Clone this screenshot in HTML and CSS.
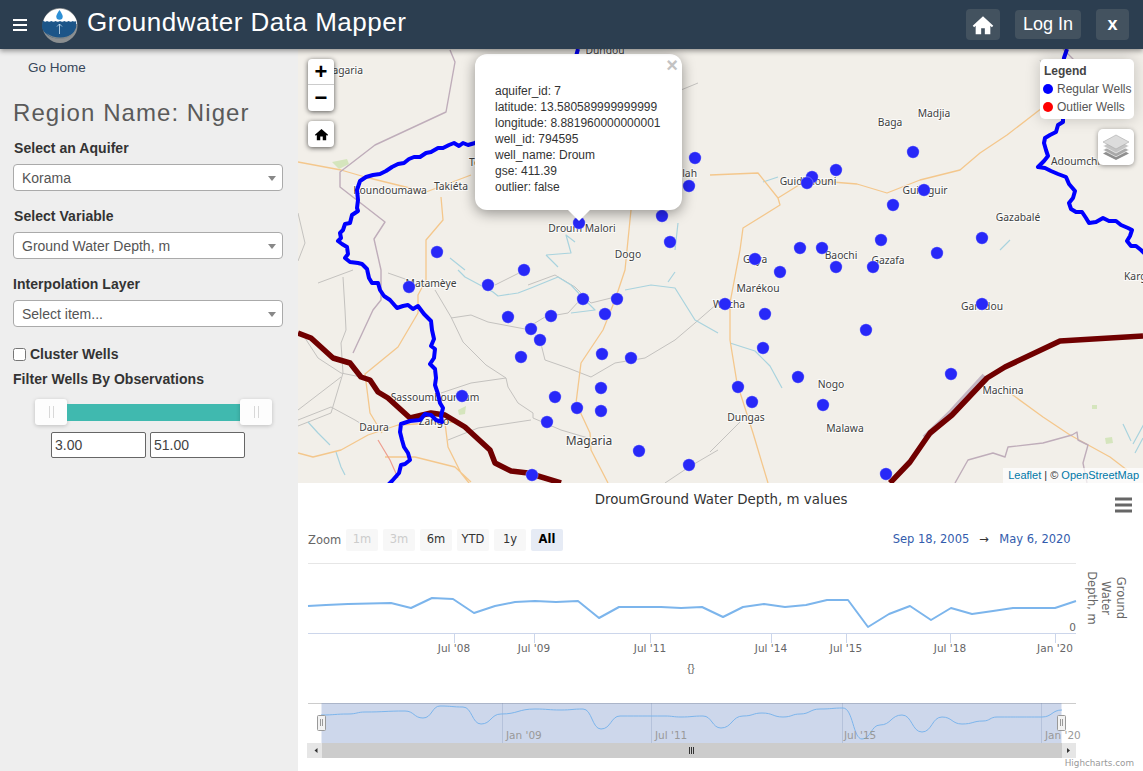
FILE: index.html
```html
<!DOCTYPE html>
<html lang="en">
<head>
<meta charset="utf-8">
<title>Groundwater Data Mapper</title>
<link rel="stylesheet" href="styles.css">
</head>
<body>
<div class="app">
  <header class="topbar">
    <div class="burger"><span></span><span></span><span></span></div>
    <svg class="logo" viewBox="0 0 36 36">
      <circle cx="18" cy="18.5" r="17.5" fill="#8b8f91"/>
      <path d="M1 15a17.500 17.500 0 0 1 34 0v2H1z" fill="#fff"/>
      <path d="M.8 13.500q2 2 4.200 .5q2.200 1.500 4.300 0q2.200 1.500 4.300 0q2.200 1.500 4.400 0q2.200 1.500 4.300 0q2.200 1.500 4.300 0q2.200 1.500 4.300 0q1.500 1 3.300 0v6a17.500 14 0 0 1-34.400 0z" fill="#1c5588"/>
      <path d="M4 26a17 14 0 0 0 28 0q-14 9-28 0z" fill="#7d8589"/>
      <path d="M17.500 3q-3.200 4.500-3.200 6.500a3.200 3.200 0 0 0 6.400 0q0-2-3.200-6.500z" fill="#2d8fd5"/>
      <path d="M17.500 27V17m-2.500 2.500l2.500-2.500l2.500 2.500" fill="none" stroke="#cfe3f2" stroke-width=".8"/>
    </svg>
    <h1 class="brand">Groundwater Data Mapper</h1>
    <div class="actions">
      <button class="hbtn hbtn-home"><svg viewBox="0 0 24 24" class="homeicon"><path d="M12 2.500L.8 12.800l1.500 1.600L4 12.900V22h6v-6.500h4V22h6v-9.100l1.700 1.500 1.500-1.600z"/></svg></button>
      <button class="hbtn hbtn-login">Log In</button>
      <button class="hbtn hbtn-x">x</button>
    </div>
  </header>
  <div class="content">
    <aside class="sidebar">
      <a class="gohome">Go Home</a>
      <h2 class="region">Region Name: Niger</h2>
      <label class="flabel">Select an Aquifer</label>
      <div class="sel">Korama</div>
      <label class="flabel">Select Variable</label>
      <div class="sel">Ground Water Depth, m</div>
      <label class="flabel flabel-tight">Interpolation Layer</label>
      <div class="sel">Select item...</div>
      <label class="check"><input type="checkbox"><span>Cluster Wells</span></label>
      <label class="flabel flabel-filter">Filter Wells By Observations</label>
      <div class="slider">
        <div class="grip"><i></i><i></i></div>
        <div class="bar"></div>
        <div class="grip"><i></i><i></i></div>
      </div>
      <div class="ranges">
        <input class="rng" value="3.00">
        <input class="rng" value="51.00">
      </div>
    </aside>
    <main class="panel">
      <section class="map">
        <svg class="mapsvg" viewBox="298 49 845 434">
          <g class="road-gray">
            <path d="M343 277l2 33 1 20-5 13 2 30-12 40-33 13M305 338l13 20 23 15 20 4M298 410l43-33M298 420l33-13 24 13 13 8M435 290l16 27 12 25 23 23 20 13 2 9 10 16 15 10v5l28 12 27 8M441 393l30-10 35-5M448 440l30-12 53-8M451 318l20-3 17 7 37 7 20-12 23-4 12-13M540 340l5 20 23 8 23 9 24-14 30-5 30-18 20-17 23-20M495 285l16-8 14-7M528 285l27-10 20 12 16 16 20-5M388 273l20 7M318 283l35-13M665 483l24-16 29-17M710 452l30-30M298 213l7 30-7 18M681 90l17-7M1040 60l15 35"/>
          </g>
          <g class="river">
            <path d="M458 270l7 7 28 15 5 4 20-3 13-5 27-11 13 8 14 15 10 10-24 3M625 290l26-5 24 3 20 32 23 13M668 282l7-10M546 255l12 12M575 242l-9-7 5 18-25 2M450 258l15 12M678 223l-3 27M308 422l10 11 12 12M336 452l5 15 4 8M763 182l15-5M1123 424l8 17M1145 422l-12 22M1143 438l-8 15M1000 250l10-10"/>
            <path d="M730 343l25 8 15 15 12 22"/>
          </g>
          <g class="road">
            <path d="M298 162l43 8 24 7 61 15 45-17M441 197l2 23-17 20v40l-8 15v18l-20 34-33 27 5 39 12 20M298 453l15 4 28-7 27-15 30-10 55-3M445 423l3 24 13 26 12 15M385 457h30l40 10 16 15M631 210l-6 60-10 30-12 30-22 33-5 40 14 30 1 17 17 33M710 175l48-2 20 25 2 7-37 23-3 22-10 53v37l7 43 16 50 15 50M778 198l29-18 50 4 30 9 33-13 40-10 20-17 27-18 35-27 25-10M1010 393l33 24 27 18 40 22 17 13"/>
          </g>
          <path class="road-red" d="M378 440l12 20 8 18"/>
          <g class="border">
            <path d="M450 50l5 12-9 50-71 33-35 27v15l45 35-11 17 7 31v30l-8 10-20 43"/>
            <path d="M955 483l13-23 25-7 12 4 3-10 35-4 29-8 5-3 1 8 10 5-5 18 4 20M1063 49l15 15"/>
          </g>
          <path class="frontier-halo" d="M925 438l27-26 33-36"/>
          <g class="green"><path d="M332 162l15-3 2 5-10 5zM458 410l8-4-1 8-6 1zM1105 438l7-1 1 6-7 1zM1092 405h5v4h-5z"/></g>
          <g class="mlabels">
            <text class="end" x="363" y="74">Magaria</text>
            <text x="605" y="54">Dungou</text>
            <text x="390" y="194">Koundoumawa</text>
            <text x="451" y="190">Takiéta</text>
            <text class="start" x="469" y="166">Tessaoua</text>
            <text x="582" y="232">Droum Malori</text>
            <text x="628" y="258">Dogo</text>
            <text class="end" x="697" y="177">Mallah</text>
            <text x="431" y="287">Matamèye</text>
            <text x="435" y="401">Sassoumbouroum</text>
            <text x="434" y="425">Zango</text>
            <text x="374" y="431">Daura</text>
            <text class="lg" x="589" y="445">Magaria</text>
            <text x="925" y="194">Guidiguir</text>
            <text x="808" y="185">Guidimouni</text>
            <text x="1018" y="221">Gazabalé</text>
            <text x="841" y="259">Baochi</text>
            <text x="888" y="264">Gazafa</text>
            <text class="start" x="743" y="263">Gaya</text>
            <text x="758" y="292">Marékou</text>
            <text x="729" y="308">Wacha</text>
            <text x="982" y="310">Garadou</text>
            <text x="831" y="388">Nogo</text>
            <text x="1003" y="394">Machina</text>
            <text x="746" y="421">Dungas</text>
            <text x="845" y="432">Malawa</text>
            <text class="start" x="1124" y="280">Karguéri</text>
            <text class="start" x="1051" y="165">Adoumchi</text>
            <text x="890" y="126">Baga</text>
            <text x="934" y="117">Madjia</text>
          </g>
          <path class="frontier" d="M298 333l13 5 22 20 17 5 11 14 9 3 8 12 10 6 22 20 21-5 14 2 20 12 25 23 5 13 16 8 17 2 33 10M890 483l20-21 20-29 22-18 35-37 18-11 55-26 83-5"/>
          <path class="blue" d="M578 49L575 60 475 143 468 145 463 143 459 146 454 143 449 145 443 148 438 148 431 152 426 153 420 157 414 157 409 159 404 163 398 164 392 167 386 171 380 174 373 175 366 177 360 181 357 190 358 200 357 208 358 211 352 215 350 223 345 224 343 230 340 233 341 238 338 241 342 244 347 247 348 254 345 258 350 262 358 263 362 264 367 269 369 278 372 283 378 283 380 290 384 296 390 300 397 308 403 306 408 305 413 309 418 306 424 314 431 321 432 330 434 339 431 346 435 349 434 358 430 364 435 369 436 378 435 385 438 394 440 403 443 408 441 416 442 422 436 420 431 415 425 414 420 420 410 421 401 424 400 432 402 440 404 447 408 453 410 460 405 464 401 465 399 473 392 481 388 485"/>
          <path class="blue" d="M1067 49L1064 58 1063 65V122L1058 125 1056 132 1050 135 1045 138 1044 143 1046 150 1048 156 1044 161 1038 167 1045 168 1051 171 1058 174 1066 177 1069 184 1075 191 1073 198 1069 203 1071 209 1076 212 1082 212 1086 218 1089 223 1096 222 1103 218 1109 221 1116 221 1121 225 1128 228 1132 230 1130 236 1127 241 1131 246 1136 246 1141 250 1145 254"/>
          <g class="wells">
            <circle cx="579" cy="223"/><circle cx="695" cy="158"/><circle cx="689" cy="186"/><circle cx="662" cy="216"/><circle cx="670" cy="242"/><circle cx="437" cy="252"/><circle cx="524" cy="270"/><circle cx="488" cy="285"/><circle cx="409" cy="287"/><circle cx="583" cy="299"/><circle cx="617" cy="299"/><circle cx="605" cy="314"/><circle cx="508" cy="317"/><circle cx="551" cy="316"/><circle cx="531" cy="329"/><circle cx="540" cy="340"/><circle cx="521" cy="357"/><circle cx="602" cy="354"/><circle cx="631" cy="358"/><circle cx="601" cy="388"/><circle cx="555" cy="397"/><circle cx="462" cy="396"/><circle cx="577" cy="408"/><circle cx="601" cy="411"/><circle cx="547" cy="422"/><circle cx="639" cy="451"/><circle cx="689" cy="465"/><circle cx="532" cy="475"/><circle cx="755" cy="259"/><circle cx="800" cy="248"/><circle cx="822" cy="248"/><circle cx="780" cy="272"/><circle cx="836" cy="267"/><circle cx="873" cy="267"/><circle cx="881" cy="240"/><circle cx="937" cy="253"/><circle cx="982" cy="238"/><circle cx="893" cy="205"/><circle cx="924" cy="190"/><circle cx="913" cy="152"/><circle cx="836" cy="170"/><circle cx="812" cy="177"/><circle cx="807" cy="183"/><circle cx="725" cy="304"/><circle cx="765" cy="314"/><circle cx="763" cy="348"/><circle cx="866" cy="330"/><circle cx="982" cy="304"/><circle cx="951" cy="374"/><circle cx="798" cy="377"/><circle cx="738" cy="387"/><circle cx="752" cy="402"/><circle cx="823" cy="405"/><circle cx="886" cy="474"/>
          </g>
        </svg>
        <div class="zoomctl">
          <button class="zbtn zbtn-top">+</button>
          <button class="zbtn">−</button>
        </div>
        <button class="mhome"><svg viewBox="0 0 24 24" class="mhomeicon"><path d="M12 3L1.500 12.500l1.300 1.500L4.500 12.600V21h5.500v-6h4v6h5.500v-8.400l1.700 1.400 1.300-1.500z"/></svg></button>
        <div class="popup">
          <span class="pclose">×</span>
          <div>aquifer_id: 7</div>
          <div>latitude: 13.580589999999999</div>
          <div>longitude: 8.881960000000001</div>
          <div>well_id: 794595</div>
          <div>well_name: Droum</div>
          <div>gse: 411.39</div>
          <div>outlier: false</div>
          <i class="ptip"></i>
        </div>
        <div class="legend">
          <div class="ltitle">Legend</div>
          <div class="lrow"><i class="dot dot-blue"></i>Regular Wells</div>
          <div class="lrow"><i class="dot dot-red"></i>Outlier Wells</div>
        </div>
        <div class="layers">
          <svg viewBox="0 0 26 26" class="layersicon">
            <path d="M13 12.500L26 19.500 13 26 0 19.500z" fill="#8f8f8f"/>
            <path d="M13 9L26 16 13 22.800 0 16z" fill="#a9a9a9" stroke="#fff" stroke-width=".6"/>
            <path d="M13 5L26 12 13 19 0 12z" fill="#c4c4c4" stroke="#fff" stroke-width=".6"/>
            <path d="M13 1L26 8 13 15 0 8z" fill="#dcdcdc" stroke="#aaa" stroke-width=".6"/>
          </svg>
        </div>
        <div class="attrib"><a>Leaflet</a> | © <a>OpenStreetMap</a></div>
      </section>
      <section class="chart">
        <svg class="chartsvg" viewBox="298 483 845 288">
          <text class="ctitle" x="721" y="504">DroumGround Water Depth, m values</text>
          <path class="menuicon" d="M1115 499h17M1115 505h17M1115 511h17"/>
          <text class="rs-label" x="308" y="544">Zoom</text>
          <g class="rs-btn">
            <rect x="346" y="529" width="32" height="22" rx="2"/><rect x="383" y="529" width="32" height="22" rx="2"/><rect x="420" y="529" width="32" height="22" rx="2"/><rect x="457" y="529" width="32" height="22" rx="2"/><rect x="494" y="529" width="32" height="22" rx="2"/>
            <rect class="rs-on" x="531" y="529" width="32" height="22" rx="2"/>
          </g>
          <g class="rs-txt">
            <text class="dis" x="362" y="543">1m</text><text class="dis" x="399" y="543">3m</text><text x="436" y="543">6m</text><text x="473" y="543">YTD</text><text x="510" y="543">1y</text><text class="act" x="547" y="543">All</text>
          </g>
          <text class="rs-date" x="931" y="543">Sep 18, 2005</text>
          <text class="rs-arrow" x="984" y="543">→</text>
          <text class="rs-date" x="1035" y="543">May 6, 2020</text>
          <path class="grid" d="M308 563.500H1076"/>
          <path class="axis" d="M308 633.500H1076M454.500 633v10M534.500 633v10M650.500 633v10M771.500 633v10M846.500 633v10M950.500 633v10M1055.500 633v10"/>
          <path class="series" d="M308 606L326 605 348 604 391 603 411 608 432 598 453 599 474 613 495 606 515 602 535 601 556 602 578 601 599 618 619 607 640 607 661 607 681 608 702 607 723 617 743 607 764 604 785 607 806 605 827 600 848 600 868 627 889 614 910 606 931 620 951 608 972 614 993 611 1013 608 1055 608 1076 601"/>
          <g class="xlab">
            <text x="454" y="652">Jul '08</text><text x="534" y="652">Jul '09</text><text x="650" y="652">Jul '11</text><text x="771" y="652">Jul '14</text><text x="846" y="652">Jul '15</text><text x="950" y="652">Jul '18</text><text x="1055" y="652">Jan '20</text>
          </g>
          <text class="ylab" x="1076" y="631">0</text>
          <g class="ytitle" transform="rotate(90 1106 598)">
            <text x="1106" y="587">Ground</text>
            <text x="1106" y="602">Water</text>
            <text x="1106" y="616">Depth, m</text>
          </g>
          <text class="nodata" x="691" y="672">{}</text>
          <path class="navtop" d="M308 703.500H1076"/>
          <rect class="navmask" x="321.500" y="703" width="740" height="40"/>
          <path class="navgrid" d="M502.500 703v40M651.500 703v40M842.500 703v40M1041.500 703v40"/>
          <path class="navseries" d="M321 715C335 715 335 714 348 714C357 714 357 712 365 712C385 712 385 711 405 711C414 711 414 718 423 718C432 718 432 706 440 706C452 706 452 707 463 707C472 707 472 724 481 724C491 724 491 714 501 714C518 714 518 709 535 709C548 709 548 710 561 710C572 710 572 709 583 709C592 709 592 729 601 729C611 729 611 716 620 716C643 716 643 716 665 716C673 716 673 717 681 717C692 717 692 716 703 716C712 716 712 728 721 728C732 728 732 716 743 716C753 716 753 713 762 713C773 713 773 717 783 717C792 717 792 714 800 714C810 714 810 709 820 709C832 709 832 708 843 708C853 708 853 739 862 739C871 739 871 725 880 725C891 725 891 715 902 715C912 715 912 732 922 732C932 732 932 717 942 717C952 717 952 724 962 724C973 724 973 721 983 721C990 721 990 717 997 717C1020 717 1020 717 1042 717C1052 717 1052 710 1062 710"/>
          <g class="navlab">
            <text x="506" y="739">Jan '09</text><text x="655" y="739">Jul '11</text><text x="844" y="739">Jul '15</text><text x="1045" y="739">Jan '20</text>
          </g>
          <g class="navhandle">
            <rect x="317.500" y="715.500" width="8" height="15" rx="1"/><rect x="1057.500" y="715.500" width="8" height="15" rx="1"/>
            <path d="M320.500 719v7M322.500 719v7M1060.500 719v7M1062.500 719v7"/>
          </g>
          <rect class="sb-thumb" x="321" y="743" width="741" height="15"/>
          <rect class="sb-btn" x="307" y="743" width="15" height="15"/>
          <rect class="sb-btn" x="1062" y="743" width="14" height="15"/>
          <path class="sb-arrow" d="M317.500 748v5l-3-2.500zM1067 748v5l3-2.500z"/>
          <path class="sb-grip" d="M689.500 747v7M691.500 747v7M693.500 747v7"/>
          <text class="credit" x="1134" y="766">Highcharts.com</text>
        </svg>
      </section>
    </main>
  </div>
</div>
</body>
</html>
```

FILE: styles.css
```css
* { box-sizing: border-box; }
html, body { margin: 0; padding: 0; }
body { font-family: "Liberation Sans", Arial, sans-serif; color: #333; background: #fff; }
.app { width: 1143px; height: 771px; overflow: hidden; display: flex; flex-direction: column; }

.topbar { position: relative; z-index: 5; height: 49px; flex: none; display: flex; align-items: center; background: #2c3e50; box-shadow: 0 2px 5px rgba(0,0,0,.4); padding: 0 14px 0 13px; }
.burger { width: 14px; display: flex; flex-direction: column; gap: 3px; margin-right: 15px; }
.burger span { display: block; height: 2px; background: #fff; }
.logo { width: 36px; height: 36px; margin-right: 9px; flex: none; }
.brand { margin: 0 0 4px; font-size: 26px; font-weight: 400; color: #fff; letter-spacing: .5px; white-space: nowrap; }
.actions { margin-left: auto; display: flex; align-items: center; gap: 15px; }
.hbtn { border: 0; padding: 0; background: #43525f; color: #fff; border-radius: 4px; font-family: inherit; font-size: 18px; display: flex; align-items: center; justify-content: center; }
.hbtn-home { width: 34px; height: 31px; }
.hbtn-login { width: 66px; height: 29px; }
.hbtn-x { width: 33px; height: 31px; font-weight: 700; }
.homeicon { width: 22px; height: 22px; fill: #fff; }

.content { flex: 1; display: flex; min-height: 0; }
.sidebar { width: 298px; flex: none; background: #eee; padding: 11px 15px 0 13px; display: flex; flex-direction: column; }
.gohome { font-size: 13.500px; line-height: 16px; color: #37475a; margin-left: 15px; }
.region { margin: 23px 0 0; font-size: 24px; line-height: 28px; font-weight: 400; color: #5a5a5a; letter-spacing: 1.060px; white-space: nowrap; }
.flabel { display: block; font-size: 14px; line-height: 16px; font-weight: 700; color: #333; margin: 13px 0 8px 1px; letter-spacing: .05px; }
.sel + .flabel { margin-top: 17px; }
.sel + .flabel-tight { margin-left: 0; }
.sel { position: relative; height: 27px; background: #fff; border: 1px solid #aaa; border-radius: 4px; font-size: 14px; line-height: 26px; padding-left: 8px; color: #555; }
.sel::after { content: ""; position: absolute; right: 6px; top: 11px; border: 4.500px solid transparent; border-top: 5px solid #888; border-bottom: 0; }
.check { display: flex; align-items: center; gap: 4px; margin-top: 19px; font-size: 14px; line-height: 16px; font-weight: 700; color: #333; }
.check input { margin: 0; width: 13px; height: 13px; }
.flabel-filter { margin: 9px 0 0; }
.slider { display: flex; align-items: center; margin: 12px 0 0 22px; width: 237px; }
.grip { width: 32px; height: 26px; flex: none; background: #fdfdfd; border-radius: 3px; box-shadow: 0 1px 4px rgba(0,0,0,.2); display: flex; justify-content: center; gap: 3px; padding-top: 7px; }
.grip i { display: block; width: 1px; height: 12px; background: #d8d8d8; }
.bar { flex: 1; height: 17px; background: #40b9af; }
.ranges { display: flex; gap: 4px; margin: 7px 0 0 38px; }
.rng { width: 95px; height: 26px; border: 1px solid #666; border-radius: 2px; background: #fff; padding: 0 3px; font: 14px "Liberation Sans", Arial, sans-serif; color: #444; }

.panel { flex: 1; min-width: 0; display: flex; flex-direction: column; }
.map { position: relative; height: 434px; flex: none; background: #f2efe9; overflow: hidden; }
.mapsvg { display: block; width: 845px; height: 434px; }
.road-gray path { fill: none; stroke: #c4c2bf; stroke-width: 1; stroke-linejoin: round; }
.river path { fill: none; stroke: #a9d3de; stroke-width: 1.200; stroke-linejoin: round; }
.road path { fill: none; stroke: #f4c78c; stroke-width: 1.300; stroke-linejoin: round; }
.road-red { fill: none; stroke: #ee9d8e; stroke-width: 1.200; }
.border path { fill: none; stroke: #bfadba; stroke-width: 1.400; stroke-linejoin: round; }
.frontier-halo { fill: none; stroke: #c4b6c3; stroke-width: 6.500; }
.green path { fill: #d5e5bd; }
.mlabels text { font-family: "Noto Sans", sans-serif; font-size: 10.300px; fill: #3e3e3e; text-anchor: middle; paint-order: stroke; stroke: rgba(255,255,255,.75); stroke-width: 2px; }
.mlabels .start { text-anchor: start; }
.mlabels .end { text-anchor: end; }
.mlabels .lg { font-size: 12px; }
.frontier { fill: none; stroke: #700000; stroke-width: 5.500; stroke-linejoin: round; }
.blue { fill: none; stroke: #0000ff; stroke-width: 4; stroke-linejoin: round; }
.wells circle { r: 6.200px; fill: #2828f8; stroke: rgba(255,255,255,.35); stroke-width: .8; }

.zoomctl { position: absolute; left: 10px; top: 10px; width: 26px; background: #fff; border-radius: 4px; box-shadow: 0 1px 5px rgba(0,0,0,.65); display: flex; flex-direction: column; }
.zbtn { width: 26px; height: 26px; border: 0; padding: 0; background: transparent; font: 700 22px/26px "Liberation Sans", Arial, sans-serif; color: #000; }
.zbtn-top { border-bottom: 1px solid #ccc; }
.mhome { position: absolute; left: 10px; top: 72px; width: 26px; height: 26px; border: 0; padding: 0; background: #fff; border-radius: 4px; box-shadow: 0 1px 5px rgba(0,0,0,.65); display: flex; align-items: center; justify-content: center; }
.mhomeicon { width: 15px; height: 15px; fill: #000; }

.popup { position: absolute; left: 177px; top: 5px; width: 207px; height: 156px; background: #fff; border-radius: 12px; box-shadow: 0 3px 14px rgba(0,0,0,.4); padding: 29px 0 0 20px; font-size: 12px; line-height: 16px; color: #333; white-space: nowrap; }
.pclose { position: absolute; right: 4px; top: 2px; font: 700 20px/18px "Liberation Sans", Arial, sans-serif; color: #c3c3c3; }
.ptip { position: absolute; left: 93px; top: 156px; width: 0; height: 0; border: 11px solid transparent; border-top: 11px solid #fff; border-bottom: 0; }

.legend { position: absolute; right: 9px; top: 10px; width: 94px; height: 60px; background: #fff; border-radius: 5px; box-shadow: 0 0 15px rgba(0,0,0,.2); padding: 4px 0 0 3px; font-size: 12px; line-height: 18px; color: #555; white-space: nowrap; }
.ltitle { font-weight: 700; color: #444; padding-left: 1px; line-height: 16px; margin-bottom: 1px; }
.lrow { display: flex; align-items: center; gap: 4px; }
.dot { display: block; width: 10px; height: 10px; border-radius: 50%; flex: none; }
.dot-blue { background: #0000ff; }
.dot-red { background: #ff0000; }
.layers { position: absolute; right: 9px; top: 80px; width: 36px; height: 36px; background: #fff; border-radius: 5px; box-shadow: 0 1px 5px rgba(0,0,0,.4); display: flex; align-items: center; justify-content: center; }
.layersicon { width: 26px; height: 26px; }
.attrib { position: absolute; right: 0; bottom: 0; height: 15px; padding: 0 4px 0 5px; background: rgba(255,255,255,.7); font-size: 11px; line-height: 15px; color: #333; white-space: nowrap; }
.attrib a { color: #0078a8; }

.chart { flex: 1; min-height: 0; background: #fff; }
.chartsvg { display: block; width: 845px; height: 288px; font-family: "DejaVu Sans", sans-serif; }
.ctitle { font-size: 13.400px; fill: #333; text-anchor: middle; }
.menuicon { stroke: #666; stroke-width: 3; fill: none; }
.rs-label { font-size: 11.500px; fill: #666; }
.rs-btn rect { fill: #f7f7f7; }
.rs-btn .rs-on { fill: #e6ebf5; }
.rs-txt text { font-size: 11.500px; fill: #333; text-anchor: middle; }
.rs-txt .dis { fill: #ccc; }
.rs-txt .act { fill: #000; font-weight: 700; }
.rs-date { font-size: 11.500px; fill: #335cad; text-anchor: middle; }
.rs-arrow { font-size: 11.500px; fill: #333; text-anchor: middle; }
.grid { stroke: #e6e6e6; fill: none; }
.axis { stroke: #ccd6eb; fill: none; }
.series { fill: none; stroke: #7cb5ec; stroke-width: 2; stroke-linejoin: round; }
.xlab text { font-size: 10.500px; fill: #666; text-anchor: middle; }
.ylab { font-size: 10.500px; fill: #666; text-anchor: end; }
.ytitle text { font-size: 11.500px; fill: #666; text-anchor: middle; }
.nodata { font-family: "Liberation Sans", sans-serif; font-size: 11px; fill: #666; text-anchor: middle; }
.navtop { stroke: #ccc; fill: none; }
.navmask { fill: rgba(102,133,194,.33); }
.navgrid { stroke: rgba(110,130,170,.25); fill: none; }
.navseries { fill: none; stroke: #7cb5ec; stroke-width: 1; }
.navlab text { font-size: 10.500px; fill: #999; }
.navhandle rect { fill: #f2f2f2; stroke: #999; }
.navhandle path { stroke: #999; fill: none; }
.sb-thumb { fill: #ccc; }
.sb-btn { fill: #e6e6e6; }
.sb-arrow { fill: #333; }
.sb-grip { stroke: #333; fill: none; }
.credit { font-size: 8.800px; fill: #999; text-anchor: end; }
```
